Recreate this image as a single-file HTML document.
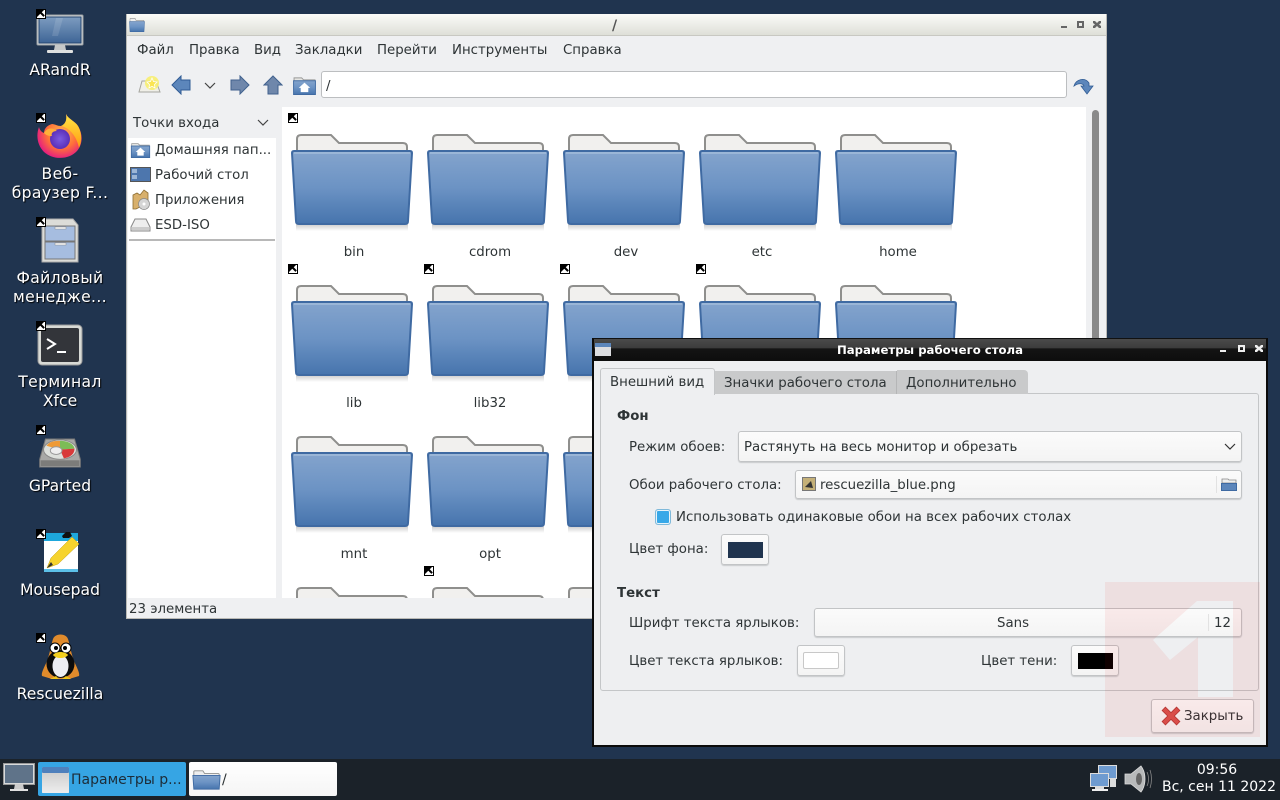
<!DOCTYPE html>
<html><head><meta charset="utf-8"><style>
html,body{margin:0;padding:0;width:1280px;height:800px;overflow:hidden;background:#20344f}
*{box-sizing:border-box}
body{font-family:"DejaVu Sans","Liberation Sans",sans-serif;font-size:13.33px;color:#2e3436;position:relative}
.a{position:absolute}
.t{position:absolute;white-space:nowrap;line-height:16px;height:16px;margin-top:2px}
.d{position:absolute;left:0;width:120px;text-align:center;color:#fff;font-size:15.6px;line-height:19px;text-shadow:1px 1px 1px #000;margin-top:1px}
.d span{letter-spacing:.35px}
.m{position:absolute;width:10px;height:10px;background:#fff;border:1px solid #000;overflow:hidden}
body>.m{margin-top:1px}
.m:after{content:"";position:absolute;left:0;top:0;width:0;height:0;border-top:7px solid #000;border-right:7px solid transparent}
.m:before{content:"";position:absolute;left:2px;top:3px;width:6px;height:2px;background:#000;transform:rotate(45deg)}
.btn{position:absolute;background:linear-gradient(#fbfbfb,#f4f4f4);border:1px solid #c2c4c6;border-radius:3px;box-shadow:0 1px 1px #c8cacc}
.l{text-align:center;width:124px}
svg{position:absolute;overflow:visible}
</style></head><body>
<svg width="0" height="0" style="left:0;top:0"><defs>
<linearGradient id="fg" x1="0" y1="0" x2="0" y2="1"><stop offset="0" stop-color="#84a4cd"/><stop offset=".5" stop-color="#6c93c4"/><stop offset="1" stop-color="#4674ad"/></linearGradient>
<linearGradient id="sh" x1="0" y1="0" x2="0" y2="1"><stop offset="0" stop-color="#c4c4c4"/><stop offset="1" stop-color="#fff"/></linearGradient>
<symbol id="folder" viewBox="0 0 124 100" overflow="visible">
<rect x="6" y="90" width="112" height="8" fill="url(#sh)"/>
<path d="M7 20V6q0-4 4-4H41L49 10H113q4 0 4 4V20Z" fill="#f1f0ee" stroke="#8f8f8d" stroke-width="2"/>
<path d="M4 18H120q2 0 2 2L118 88q0 3-3 3H9q-3 0-3-3L2 20q0-2 2-2Z" fill="url(#fg)" stroke="#3f6aa2" stroke-width="2"/>
<path d="M4 20H120" stroke="#b3c8e2" stroke-width="1"/>
</symbol>
<symbol id="sfolder" viewBox="0 0 32 24" overflow="visible" preserveAspectRatio="none">
<path d="M2 7V3q0-1 1-1H12l2 3H29q1 0 1 1V9Z" fill="#eee" stroke="#8f8f8d"/>
<path d="M1 7H31L30 22H2Z" fill="url(#fg)" stroke="#3f6aa2"/>
</symbol>
<linearGradient id="screen" x1="0" y1="0" x2="0" y2="1"><stop offset="0" stop-color="#7d9cc0"/><stop offset="1" stop-color="#3e6596"/></linearGradient>
<radialGradient id="ff" cx=".55" cy=".45" r=".6"><stop offset="0" stop-color="#ffbd4f"/><stop offset=".55" stop-color="#ff7139"/><stop offset="1" stop-color="#e31587"/></radialGradient>
<linearGradient id="ff2" x1="0" y1="0" x2="0" y2="1"><stop offset="0" stop-color="#ffe847"/><stop offset="1" stop-color="#ff980e"/></linearGradient>
<radialGradient id="ff3"><stop offset="0" stop-color="#7b5be0"/><stop offset="1" stop-color="#5a2fb8"/></radialGradient>
<symbol id="monitor" viewBox="0 0 48 40" overflow="visible">
<rect x="1" y="1" width="46" height="30" rx="1" fill="#d5d8da" stroke="#9a9fa3"/>
<rect x="3" y="3" width="42" height="26" fill="url(#screen)" stroke="#26466f"/>
<path d="M20 4 27 4 22 22 16 22Z" fill="#fff" opacity=".12"/>
<path d="M19 31H29L30 36H18Z" fill="#c5c8c9"/>
<rect x="11" y="36" width="26" height="3" rx="1" fill="#dfe0df"/>
</symbol>
<symbol id="back" viewBox="0 0 20 20"><path d="M1 10 10 1V5H19V15H10V19Z" fill="#5c86bb" stroke="#2f5b94"/></symbol>
<symbol id="fwd" viewBox="0 0 20 20"><path d="M19 10 10 1V5H1V15H10V19Z" fill="#6f87ab" stroke="#40618e"/></symbol>
<symbol id="up" viewBox="0 0 20 20"><path d="M10 1 19 10H15V19H5V10H1Z" fill="#6f87ab" stroke="#40618e"/></symbol>
<symbol id="hfolder" viewBox="0 0 24 20" overflow="visible">
<path d="M1 5V2H9L11 4H23V8H1Z" fill="#e5e5e2" stroke="#999"/>
<rect x=".5" y="5" width="23" height="14.5" fill="url(#fg)" stroke="#3f6aa2"/>
<path d="M12 7 18 12.500H16V17H8V12.500H6Z" fill="#fff"/>
</symbol>
</defs></svg>

<!-- Desktop icons -->
<svg style="left:36px;top:14px" width="48" height="40"><use href="#monitor" width="48" height="40"/></svg>
<div class="d" style="top:60px">ARandR</div>
<svg style="left:37px;top:113px" width="46" height="46" viewBox="0 0 46 46">
<path d="M29 1C31 6 38 8 41 13 46 21 46 31 40 38 33 46 17 48 7 39 0 32-1 22 2 14 3 18 5 19 7 20 7 15 11 12 15 11 18 11 20 13 24 13 29 11 30 6 29 1Z" fill="url(#ff)"/>
<path d="M29 1C31 6 38 8 41 13 45 20 45 28 42 35 40 24 33 15 24 13 29 11 30 6 29 1Z" fill="url(#ff2)"/>
<circle cx="23" cy="26" r="10" fill="url(#ff3)"/>
<path d="M7 20C10 15 15 14 20 18 15 18 14 21 15 23 11 23 9 22 7 20Z" fill="#ffb03a"/>
</svg>
<div class="d" style="top:164px"><span>Веб-<br>браузер F...</span></div>
<svg style="left:41px;top:218px" width="38" height="45" viewBox="0 0 38 45">
<path d="M1 1H32L37 7V44H1Z" fill="#dcdcd8" stroke="#aaa"/>
<rect x="4" y="8" width="30" height="15" fill="#a6bde0" stroke="#777"/>
<rect x="4" y="24" width="30" height="17" fill="#a6bde0" stroke="#777"/>
<rect x="14" y="9" width="11" height="2" fill="#fff" stroke="#888" stroke-width=".5"/>
<rect x="14" y="25" width="11" height="2" fill="#fff" stroke="#888" stroke-width=".5"/>
</svg>
<div class="d" style="top:268px"><span>Файловый<br>менедже...</span></div>
<svg style="left:37px;top:324px" width="46" height="42" viewBox="0 0 46 42">
<rect x="1" y="1" width="44" height="40" rx="4" fill="#d8dad6" stroke="#999"/>
<rect x="4" y="4" width="38" height="34" rx="2" fill="#33353a"/>
<path d="M10 15 18 20 10 25" fill="none" stroke="#fff" stroke-width="2"/>
<rect x="20" y="27" width="9" height="2" fill="#fff"/>
</svg>
<div class="d" style="top:372px"><span>Терминал</span><br>Xfce</div>
<svg style="left:38px;top:438px" width="44" height="31" viewBox="0 0 44 32">
<path d="M7 1H37L43 22V30H1V22Z" fill="#a8a8a6" stroke="#777"/>
<ellipse cx="22" cy="12" rx="17" ry="10" fill="#dde0dc" stroke="#888"/>
<path d="M22 12 8 8C12 3 17 3 22 3Z" fill="#ee9a35"/>
<path d="M22 12 22 3C30 3 36 6 37 11Z" fill="#7cbc57"/>
<path d="M22 12 37 11C37 17 32 20 26 21Z" fill="#d8393a"/>
<ellipse cx="18" cy="13" rx="6" ry="4" fill="#eee" stroke="#999"/>
<rect x="2" y="23" width="40" height="6" fill="#7c7c7a"/>
</svg>
<div class="d" style="top:476px">GParted</div>
<svg style="left:42px;top:531px" width="38" height="44" viewBox="0 0 38 44">
<path d="M2 3H36V41H2Z" fill="#fff"/>
<path d="M2 2H36V10H2Z" fill="#1da7dc"/>
<path d="M2 38H36V41H2Z" fill="#5cc0e8"/>
<path d="M20 5 24 1 28 1 30 5 27 7H21Z" fill="#111"/>
<path d="M5 37 9 27 30 6 37 13 16 33Z" fill="#f6d32d" stroke="#c7a10a" stroke-width=".5"/>
<path d="M5 37 9 31 11 34Z" fill="#333"/>
</svg>
<div class="d" style="top:580px">Mousepad</div>
<svg style="left:41px;top:633px" width="39" height="48" viewBox="0 0 39 48">
<path d="M12 6C14 0 25 0 27 6 29 12 30 20 33 28 36 35 39 40 38 43L28 46H11L1 43C0 40 3 35 6 28 9 20 10 12 12 6Z" fill="#e08b2c"/>
<ellipse cx="19.500" cy="31" rx="14" ry="14" fill="#0c0c0c"/>
<ellipse cx="19.500" cy="33" rx="8" ry="11" fill="#eeeef2"/>
<circle cx="14" cy="15" r="5" fill="#fff" stroke="#000"/><circle cx="25" cy="15" r="5" fill="#fff" stroke="#000"/>
<circle cx="15" cy="15" r="2" fill="#000"/><circle cx="24" cy="15" r="2" fill="#000"/>
<path d="M12 22C15 18 24 18 27 22 24 26 15 26 12 22Z" fill="#f3cf1e"/>
<path d="M9 46 15 43 18 46ZM21 46 25 43 30 46Z" fill="#f0c419"/>
</svg>
<div class="d" style="top:684px">Rescuezilla</div>
<div class="m" style="left:36px;top:8px"></div><div class="m" style="left:36px;top:112px"></div><div class="m" style="left:36px;top:216px"></div><div class="m" style="left:36px;top:320px"></div><div class="m" style="left:36px;top:424px"></div><div class="m" style="left:36px;top:528px"></div><div class="m" style="left:36px;top:632px"></div>

<!-- File manager -->
<div class="a" style="left:126px;top:14px;width:981px;height:605px;background:#eff0f2;border:1px solid #b9b9b5;border-top:0;overflow:hidden">
<div class="a" style="left:0;top:0;width:979px;height:22px;background:linear-gradient(#fbfbf8,#dedfd8);border-bottom:1px solid #c8c8c2"></div>
</div>
<svg style="left:129px;top:17px" width="16" height="16"><use href="#sfolder" width="16" height="16"/></svg>
<div class="t" style="left:612px;top:17px;color:#555;font-size:14px;font-weight:bold;margin-top:1px">/</div>
<svg style="left:1060px;top:20px" width="44" height="10" viewBox="0 0 44 10" fill="#666">
<rect x="1" y="6" width="6" height="2"/><path d="M17 1H24V8H17ZM19 3V6H22V3Z" fill-rule="evenodd"/><path d="M33 1 35 1 37 3 39 1 41 1 41 3 39 4.500 41 6 41 8 39 8 37 6 35 8 33 8 33 6 35 4.500 33 3Z"/>
</svg>
<div class="t" style="left:137px;top:41px">Файл</div>
<div class="t" style="left:189px;top:41px">Правка</div>
<div class="t" style="left:254px;top:41px">Вид</div>
<div class="t" style="left:295px;top:41px">Закладки</div>
<div class="t" style="left:377px;top:41px">Перейти</div>
<div class="t" style="left:452px;top:41px">Инструменты</div>
<div class="t" style="left:563px;top:41px">Справка</div>
<!-- toolbar -->
<svg style="left:138px;top:75px" width="23" height="19" viewBox="0 0 23 19">
<path d="M4 6H18L22 17H1Z" fill="#f0efe8" stroke="#a5a59f"/>
<circle cx="14" cy="8" r="7" fill="#f7ee70" opacity=".9"/>
<path d="M14 3 15.500 6.500 19 7 16.500 9.500 17 13 14 11.300 11 13 11.500 9.500 9 7 12.500 6.500Z" fill="#fbe552" stroke="#fff" stroke-width=".8"/>
</svg>
<svg style="left:171px;top:75px" width="20" height="20"><use href="#back" width="20" height="20"/></svg>
<svg style="left:204px;top:82px" width="12" height="8"><path d="M1 1 6 6 11 1" fill="none" stroke="#444" stroke-width="1.200"/></svg>
<svg style="left:230px;top:75px" width="20" height="20"><use href="#fwd" width="20" height="20"/></svg>
<svg style="left:263px;top:75px" width="20" height="20"><use href="#up" width="20" height="20"/></svg>
<svg style="left:293px;top:76px" width="23" height="19"><use href="#hfolder" width="23" height="19"/></svg>
<div class="a" style="left:321px;top:71px;width:746px;height:27px;background:#fff;border:1px solid #bcbec0;border-radius:3px"></div>
<div class="t" style="left:326px;top:77px">/</div>
<svg style="left:1073px;top:77px" width="21" height="18" viewBox="0 0 21 18">
<path d="M1 9C3 2 12 0 16 6V9H20L14 17 8 9H11C10 6 5 6 1 9Z" fill="#5c86bb" stroke="#2f5b94" stroke-width=".8"/>
</svg>
<!-- sidebar -->
<div class="t" style="left:133px;top:114px">Точки входа</div>
<svg style="left:257px;top:119px" width="12" height="8"><path d="M1 1 6 6 11 1" fill="none" stroke="#444" stroke-width="1.200"/></svg>
<div class="a" style="left:128px;top:138px;width:148px;height:460px;background:#fff"></div>
<svg style="left:130px;top:142px" width="21" height="16"><use href="#hfolder" width="21" height="16"/></svg>
<div class="t" style="left:155px;top:141px">Домашняя пап...</div>
<svg style="left:130px;top:167px" width="21" height="15" viewBox="0 0 21 15"><rect x=".5" y=".5" width="20" height="14" fill="#4d76ad" stroke="#555"/><path d="M2 2H7V6H2ZM2 8H7V12H2Z" fill="#9cb6d6"/></svg>
<div class="t" style="left:155px;top:166px">Рабочий стол</div>
<svg style="left:132px;top:189px" width="19" height="21" viewBox="0 0 19 21"><path d="M1 6 5 4 8 6 12 1 16 4V14L4 20H1Z" fill="#d8b06c" stroke="#8c6d33" stroke-width=".8"/><circle cx="12" cy="15" r="5.500" fill="#d5d5d5" stroke="#888" stroke-width=".7"/><circle cx="12" cy="15" r="1.500" fill="#fff"/></svg>
<div class="t" style="left:155px;top:191px">Приложения</div>
<svg style="left:130px;top:218px" width="21" height="14" viewBox="0 0 21 14"><path d="M5 1H16L20 9V13H1V9Z" fill="#eee" stroke="#888"/><rect x="2" y="9" width="17" height="3" fill="#ccc"/></svg>
<div class="t" style="left:155px;top:216px">ESD-ISO</div>
<div class="a" style="left:129px;top:239px;width:146px;height:2px;background:#b8b8b8"></div>
<!-- content -->
<div class="a" style="left:282px;top:107px;width:804px;height:491px;background:#fff;overflow:hidden">
<svg style="left:8px;top:26px" width="124" height="100"><use href="#folder" width="124" height="100"/></svg>
<svg style="left:144px;top:26px" width="124" height="100"><use href="#folder" width="124" height="100"/></svg>
<svg style="left:280px;top:26px" width="124" height="100"><use href="#folder" width="124" height="100"/></svg>
<svg style="left:416px;top:26px" width="124" height="100"><use href="#folder" width="124" height="100"/></svg>
<svg style="left:552px;top:26px" width="124" height="100"><use href="#folder" width="124" height="100"/></svg>
<svg style="left:8px;top:177px" width="124" height="100"><use href="#folder" width="124" height="100"/></svg>
<svg style="left:144px;top:177px" width="124" height="100"><use href="#folder" width="124" height="100"/></svg>
<svg style="left:280px;top:177px" width="124" height="100"><use href="#folder" width="124" height="100"/></svg>
<svg style="left:416px;top:177px" width="124" height="100"><use href="#folder" width="124" height="100"/></svg>
<svg style="left:552px;top:177px" width="124" height="100"><use href="#folder" width="124" height="100"/></svg>
<svg style="left:8px;top:328px" width="124" height="100"><use href="#folder" width="124" height="100"/></svg>
<svg style="left:144px;top:328px" width="124" height="100"><use href="#folder" width="124" height="100"/></svg>
<svg style="left:280px;top:328px" width="124" height="100"><use href="#folder" width="124" height="100"/></svg>
<svg style="left:8px;top:479px" width="124" height="100"><use href="#folder" width="124" height="100"/></svg>
<svg style="left:144px;top:479px" width="124" height="100"><use href="#folder" width="124" height="100"/></svg>
<svg style="left:280px;top:479px" width="124" height="100"><use href="#folder" width="124" height="100"/></svg>
<div class="t l" style="left:10px;top:136px">bin</div>
<div class="t l" style="left:146px;top:136px">cdrom</div>
<div class="t l" style="left:282px;top:136px">dev</div>
<div class="t l" style="left:418px;top:136px">etc</div>
<div class="t l" style="left:554px;top:136px">home</div>
<div class="t l" style="left:10px;top:287px">lib</div>
<div class="t l" style="left:146px;top:287px">lib32</div>
<div class="t l" style="left:10px;top:438px">mnt</div>
<div class="t l" style="left:146px;top:438px">opt</div>
<div class="m" style="left:6px;top:6px"></div>
<div class="m" style="left:6px;top:157px"></div><div class="m" style="left:142px;top:157px"></div><div class="m" style="left:278px;top:157px"></div><div class="m" style="left:414px;top:157px"></div>
<div class="m" style="left:142px;top:459px"></div>
</div>
<div class="a" style="left:1092px;top:110px;width:7px;height:240px;background:#8a8a8a;border-radius:4px"></div>
<div class="t" style="left:129px;top:600px">23 элемента</div>

<!-- Dialog -->
<div class="a" style="left:592px;top:338px;width:676px;height:409px;background:#eeeff1;border:2px solid #0b0b0b;border-top:1px solid #111"></div>
<div class="a" style="left:594px;top:339px;width:672px;height:22px;background:linear-gradient(#4a4a4a 0,#3c3c3c 40%,#141414 45%,#0d0d0d 100%)"></div>
<svg style="left:595px;top:343px" width="16" height="13" viewBox="0 0 16 13"><rect width="16" height="13" fill="#dcdde0"/><rect width="16" height="4" fill="#5c86bb"/></svg>
<div class="t" style="left:594px;top:342px;width:672px;text-align:center;color:#fff;font-weight:bold;font-size:11.7px;margin-top:0">Параметры рабочего стола</div>
<svg style="left:1219px;top:344px" width="46" height="10" viewBox="0 0 46 10" fill="#eee">
<rect x="1" y="6" width="6" height="2"/><path d="M19 1H26V8H19ZM21 3V6H24V3Z" fill-rule="evenodd"/><path d="M36 1 38 1 40 3 42 1 44 1 44 3 42 4.500 44 6 44 8 42 8 40 6 38 8 36 8 36 6 38 4.500 36 3Z"/>
</svg>
<!-- panel -->
<div class="a" style="left:600px;top:393px;width:659px;height:298px;border:1px solid #c4c6c8;border-radius:3px"></div>
<div class="a" style="left:715px;top:371px;width:182px;height:23px;background:#c9cacb;border-right:1px solid #b5b6b7"></div>
<div class="a" style="left:897px;top:370px;width:131px;height:24px;background:#c9cacb;border-radius:0 4px 0 0"></div>
<div class="a" style="left:600px;top:368px;width:115px;height:27px;background:#eeeff1;border:1px solid #c4c6c8;border-bottom:0;border-radius:3px 3px 0 0"></div>
<div class="t" style="left:610px;top:373px">Внешний вид</div>
<div class="t" style="left:724px;top:374px">Значки рабочего стола</div>
<div class="t" style="left:906px;top:374px">Дополнительно</div>
<div class="t" style="left:617px;top:407px;font-weight:bold">Фон</div>
<div class="t" style="left:629px;top:438px">Режим обоев:</div>
<div class="btn" style="left:738px;top:431px;width:504px;height:31px"></div>
<div class="t" style="left:744px;top:438px">Растянуть на весь монитор и обрезать</div>
<svg style="left:1224px;top:443px" width="12" height="8"><path d="M1 1 6 6 11 1" fill="none" stroke="#333" stroke-width="1.200"/></svg>
<div class="t" style="left:629px;top:476px">Обои рабочего стола:</div>
<div class="btn" style="left:795px;top:470px;width:447px;height:29px"></div>
<svg style="left:802px;top:477px" width="14" height="14" viewBox="0 0 14 14"><rect x=".5" y=".5" width="13" height="13" fill="#c4b078" stroke="#777"/><path d="M3 10 9 4 11 11Z" fill="#333"/></svg>
<div class="t" style="left:820px;top:476px">rescuezilla_blue.png</div>
<div class="a" style="left:1216px;top:476px;width:1px;height:17px;background:#e2e2e2"></div>
<svg style="left:1221px;top:478px" width="16" height="13" viewBox="0 0 16 13"><path d="M1 5V1H7L8 2H15V5Z" fill="#eee" stroke="#888" stroke-width=".8"/><rect x=".5" y="5.500" width="15" height="7" fill="#5c86bb" stroke="#3f6aa2"/></svg>
<div class="a" style="left:655px;top:509px;width:16px;height:16px;background:#37a8e8;border:1px solid #7fb9da;border-radius:3px;box-shadow:inset 0 0 0 1px #e8f3f9"></div>
<div class="t" style="left:676px;top:508px">Использовать одинаковые обои на всех рабочих столах</div>
<div class="t" style="left:629px;top:540px">Цвет фона:</div>
<div class="btn" style="left:721px;top:534px;width:48px;height:31px"></div>
<div class="a" style="left:728px;top:542px;width:35px;height:16px;background:#20344f"></div>
<div class="t" style="left:617px;top:584px;font-weight:bold">Текст</div>
<div class="t" style="left:629px;top:614px">Шрифт текста ярлыков:</div>
<div class="btn" style="left:814px;top:608px;width:428px;height:29px"></div>
<div class="t" style="left:997px;top:614px">Sans</div>
<div class="a" style="left:1208px;top:614px;width:1px;height:17px;background:#e2e2e2"></div>
<div class="t" style="left:1214px;top:614px">12</div>
<div class="t" style="left:629px;top:652px">Цвет текста ярлыков:</div>
<div class="btn" style="left:797px;top:645px;width:48px;height:31px"></div>
<div class="a" style="left:803px;top:652px;width:36px;height:17px;background:#fff;border:1px solid #c8c8c8;border-radius:2px"></div>
<div class="t" style="left:981px;top:652px">Цвет тени:</div>
<div class="btn" style="left:1071px;top:645px;width:48px;height:31px"></div>
<div class="a" style="left:1078px;top:653px;width:35px;height:16px;background:#000"></div>
<div class="btn" style="left:1151px;top:699px;width:103px;height:34px"></div>
<svg style="left:1161px;top:706px" width="20" height="20" viewBox="0 0 18 18"><path d="M4 1 9 6 14 1 17 4 12 9 17 14 14 17 9 12 4 17 1 14 6 9 1 4Z" fill="#d9534f" stroke="#b23835" stroke-width=".7"/></svg>
<div class="t" style="left:1184px;top:707px">Закрыть</div>
<!-- watermark -->
<svg style="left:1105px;top:582px" width="161" height="156" viewBox="0 0 161 156">
<path fill="#e80000" fill-opacity=".065" fill-rule="evenodd" d="M0 0H155V155H0ZM92 19 48 58 65 78 93 55V115H128V19Z"/>
</svg>

<!-- Taskbar -->
<div class="a" style="left:0;top:759px;width:1280px;height:41px;background:#1b2229"></div>
<svg style="left:3px;top:763px" width="32" height="30" viewBox="0 0 32 30">
<rect x=".5" y=".5" width="31" height="21" fill="#d8dada" stroke="#999"/><rect x="2" y="2" width="28" height="18" fill="#5f7389"/>
<path d="M12 21H20L21 26H11Z" fill="#ccc"/><rect x="7" y="26" width="18" height="2" fill="#e0e0e0"/>
</svg>
<div class="a" style="left:38px;top:762px;width:148px;height:34px;background:#36a5e4;border-radius:2px"></div>
<svg style="left:42px;top:767px" width="27" height="26" viewBox="0 0 27 26"><rect width="27" height="26" rx="1" fill="#dcdcdc"/><rect width="27" height="6" rx="1" fill="#4f80bc"/><rect y="6" width="27" height="20" fill="url(#sh)" opacity=".5"/></svg>
<div class="t" style="left:71px;top:771px;color:#1d2c38;font-size:14px;margin-top:1px">Параметры р...</div>
<div class="a" style="left:189px;top:762px;width:148px;height:34px;background:linear-gradient(#fff,#f5f5f5);border-radius:2px"></div>
<svg style="left:192px;top:769px" width="29" height="22"><use href="#sfolder" width="29" height="22"/></svg>
<div class="t" style="left:222px;top:771px;font-size:14px;margin-top:1px">/</div>
<svg style="left:1089px;top:764px" width="30" height="28" viewBox="0 0 30 28">
<rect x="9.500" y="1.500" width="18" height="13" fill="#6e9bd0" stroke="#ddd"/><rect x="1.500" y="9.500" width="18" height="13" fill="#6e9bd0" stroke="#ddd"/>
<rect x="6" y="23" width="9" height="2" fill="#ddd"/><rect x="3" y="25" width="16" height="2" fill="#eee"/><rect x="21" y="15" width="6" height="8" fill="#ddd"/>
</svg>
<svg style="left:1123px;top:765px" width="30" height="28" viewBox="0 0 30 28">
<path d="M2 9H8L18 1C21 5 22 10 22 14 22 19 21 23 18 27L8 19H2Z" fill="#b8babb" stroke="#ddd" stroke-width=".8"/>
<ellipse cx="16" cy="14" rx="3" ry="6" fill="#666"/>
<path d="M24 7C26 11 26 17 24 21M27 5C29 11 29 17 27 23" fill="none" stroke="#888" stroke-width=".8"/>
</svg>
<div class="t" style="left:1157px;top:762px;width:120px;text-align:center;color:#fff;font-size:14px;margin-top:0">09:56</div>
<div class="t" style="left:1159px;top:779px;width:120px;text-align:center;color:#fff;font-size:14px;margin-top:0">Вс, сен 11 2022</div>
</body></html>
